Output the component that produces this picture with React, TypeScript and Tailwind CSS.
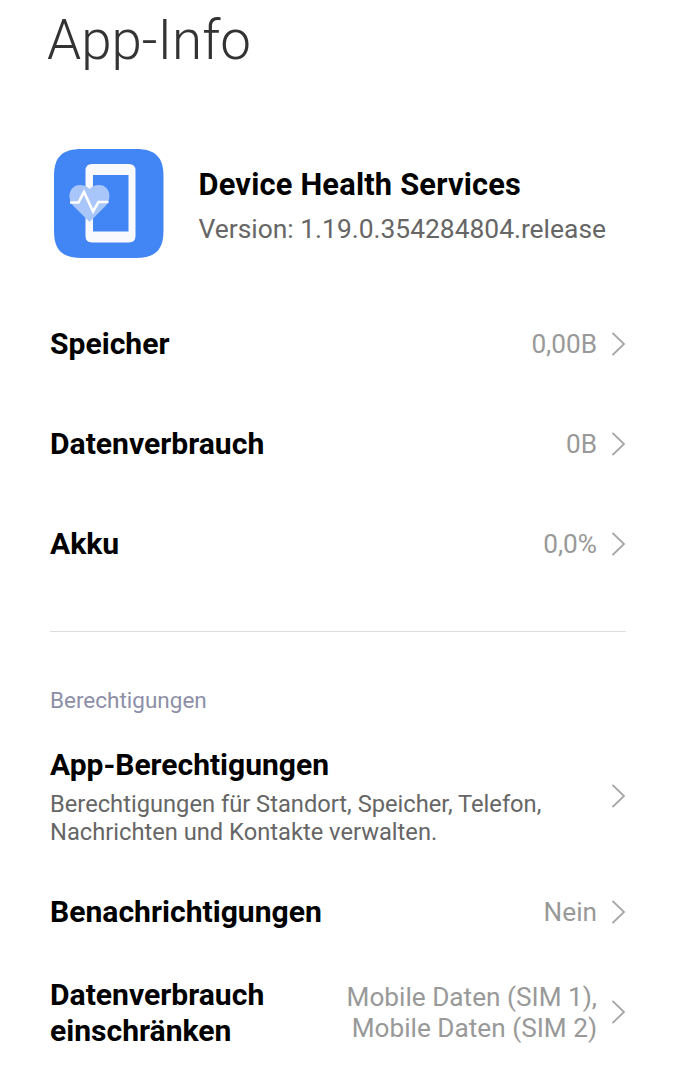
import { ReactNode } from 'react'

function Chevron() {
	return (
		<svg viewBox="0 0 14 24" className="ml-[15px] h-6 w-3.5 shrink-0" fill="none" stroke="#a6a6a6" strokeWidth="1.800">
			<path d="M0.500 1L12 12L0.500 23" />
		</svg>
	)
}

function AppIcon() {
	return (
		<svg viewBox="0 0 110 110" className="h-[110px] w-[110px] shrink-0">
			<path fill="#4285f4" d="M28 0H82C101 0 109.500 8 109.500 27V82C109.500 101 101 109 82 109H28C8 109 0 101 0 82V27C0 8 8 0 28 0Z" />
			<path fill="#f8f9fc" fillRule="evenodd" d="M38 15H75Q81.500 15 81.500 21.500V87Q81.500 93.500 75 93.500H38Q31.500 93.500 31.500 87V21.500Q31.500 15 38 15ZM39 26V82.500H74.500V26Z" />
			<path fill="#a8c6fa" d="M35.500 73L19.500 57C12 49 15.500 36 26 36Q32 36 35.500 40Q39 36 45 36C55.500 36 59 49 51.500 57Z" />
			<path fill="none" stroke="#fff" strokeWidth="2.600" d="M16 53.500H24.500L30 43L39 62.500L44.500 53H54.500" />
		</svg>
	)
}

type RowProps = {
	title: ReactNode
	value?: ReactNode
	className: string
}

function Row({ title, value, className }: RowProps) {
	return (
		<div className={`flex items-center justify-between ${className}`}>
			<div className="text-[30.1px] leading-[36px] font-bold whitespace-nowrap text-black">{title}</div>
			<div className="flex items-center">
				<span className="text-right text-[26.2px] leading-[31px] whitespace-nowrap text-[#999999]">{value}</span>
				<Chevron />
			</div>
		</div>
	)
}

export default function App() {
	return (
		<main className="h-[1080px] w-[676px] overflow-hidden bg-white pr-[50px] pl-[50px] font-['Roboto',sans-serif]">
			<h1 className="-ml-[3px] h-[149px] pt-[7px] text-[54.7px] leading-[66px] font-light text-[#333333]">App-Info</h1>

			<header className="ml-1 flex h-[145px] items-start">
				<AppIcon />
				<div className="ml-[34.5px] pt-[17px] whitespace-nowrap">
					<h2 className="text-[30.8px] leading-[37px] font-bold tracking-[0.2px] text-black">Device Health Services</h2>
					<p className="mt-[9px] text-[26.4px] leading-[34px] text-[#666666]">Version: 1.19.0.354284804.release</p>
				</div>
			</header>

			<section className="h-[338px] border-b border-[#dddddd]">
				<Row title="Speicher" value="0,00B" className="h-[100px]" />
				<Row title="Datenverbrauch" value="0B" className="h-[100px]" />
				<Row title="Akku" value="0,0%" className="h-[100px]" />
			</section>

			<section>
				<h3 className="pt-[54px] text-[22.5px] leading-[28px] text-[#8d8fa8]">Berechtigungen</h3>
				<div className="mt-8 flex h-[100px] items-center justify-between">
					<div>
						<div className="pt-px text-[30px] leading-[36px] font-bold text-black">App-Berechtigungen</div>
						<p className="mt-[7px] text-[23.7px] leading-[28px] whitespace-nowrap text-[#666666]">
							Berechtigungen für Standort, Speicher, Telefon,<br />
							Nachrichten und Kontakte verwalten.
						</p>
					</div>
					<Chevron />
				</div>
				<Row title="Benachrichtigungen" value="Nein" className="mt-4 h-[100px]" />
				<Row
					title={<div className="pt-0.5">Datenverbrauch<br />einschränken</div>}
					value={<span className="block pt-0.5">Mobile Daten (SIM 1),<br />Mobile Daten (SIM 2)</span>}
					className="h-[100px]"
				/>
			</section>
		</main>
	)
}
